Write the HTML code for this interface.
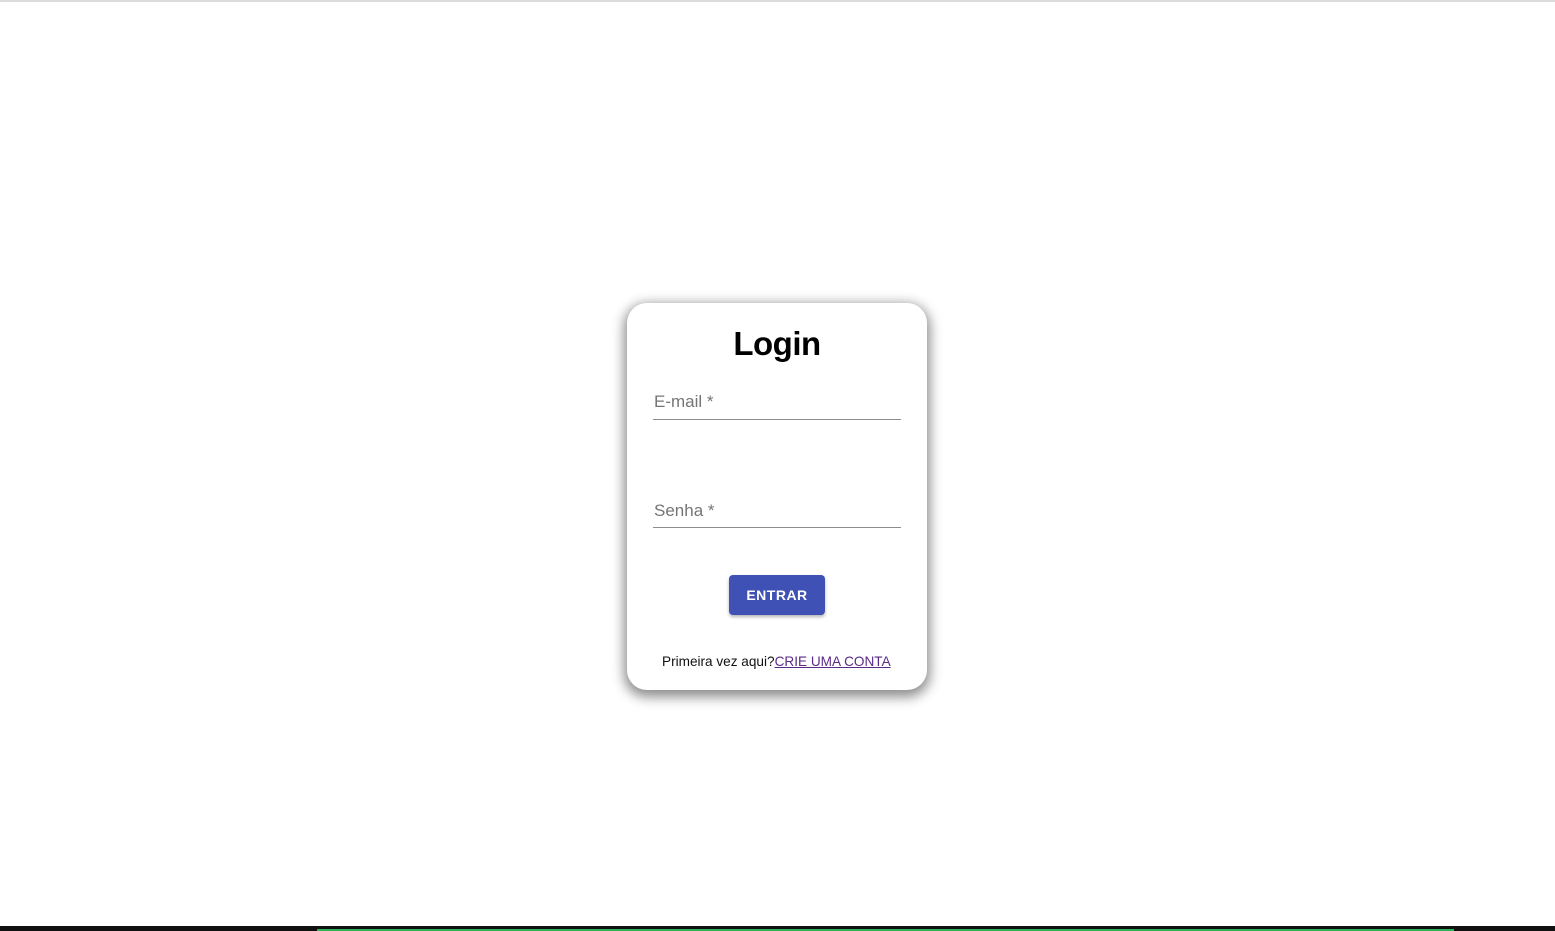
<!DOCTYPE html>
<html><head><style>
html,body{margin:0;padding:0;width:1555px;height:931px;overflow:hidden;background:#fff;font-family:"Liberation Sans",Arial,sans-serif;position:relative}
.top{position:absolute;left:0;top:0;width:1555px;height:2px;background:#dcdcdc}
.bar{position:absolute;left:0;top:926px;width:1555px;height:5px;background:#111}
.green{position:absolute;left:317px;top:929px;width:1137px;height:2px;background:#2bb35a}
.card{position:absolute;left:627px;top:303px;width:300px;height:387px;border-radius:20px;background:#fff;box-shadow:0 4px 12px 3px rgba(0,0,0,.45)}
h1{position:absolute;top:323px;left:627px;width:300px;text-align:center;margin:0;font-size:33px;font-weight:bold;line-height:42px;letter-spacing:-.5px}
.lbl{position:absolute;left:654px;font-size:17px;color:#757575}
.line{position:absolute;left:653px;width:248px;height:1px;background:#8d8d8d}
.btn{position:absolute;left:729px;top:575px;width:96px;height:40px;background:#3f51b5;border-radius:4px;color:#fff;font-weight:bold;font-size:14px;letter-spacing:.5px;text-align:center;line-height:40px;box-shadow:0 2px 3px rgba(0,0,0,.3)}
.foot{position:absolute;left:662px;top:654px;font-size:13.6px;color:#111}
.foot a{color:#5a2a86;text-decoration:underline}
</style></head><body>
<div class="top"></div>
<div class="card"></div>
<h1>Login</h1>
<div class="lbl" style="top:392px">E-mail *</div>
<div class="line" style="top:419px"></div>
<div class="lbl" style="top:501px">Senha *</div>
<div class="line" style="top:527px"></div>
<div class="btn">ENTRAR</div>
<div class="foot">Primeira vez aqui?<a>CRIE UMA CONTA</a></div>
<div class="bar"></div><div class="green"></div>
</body></html>
